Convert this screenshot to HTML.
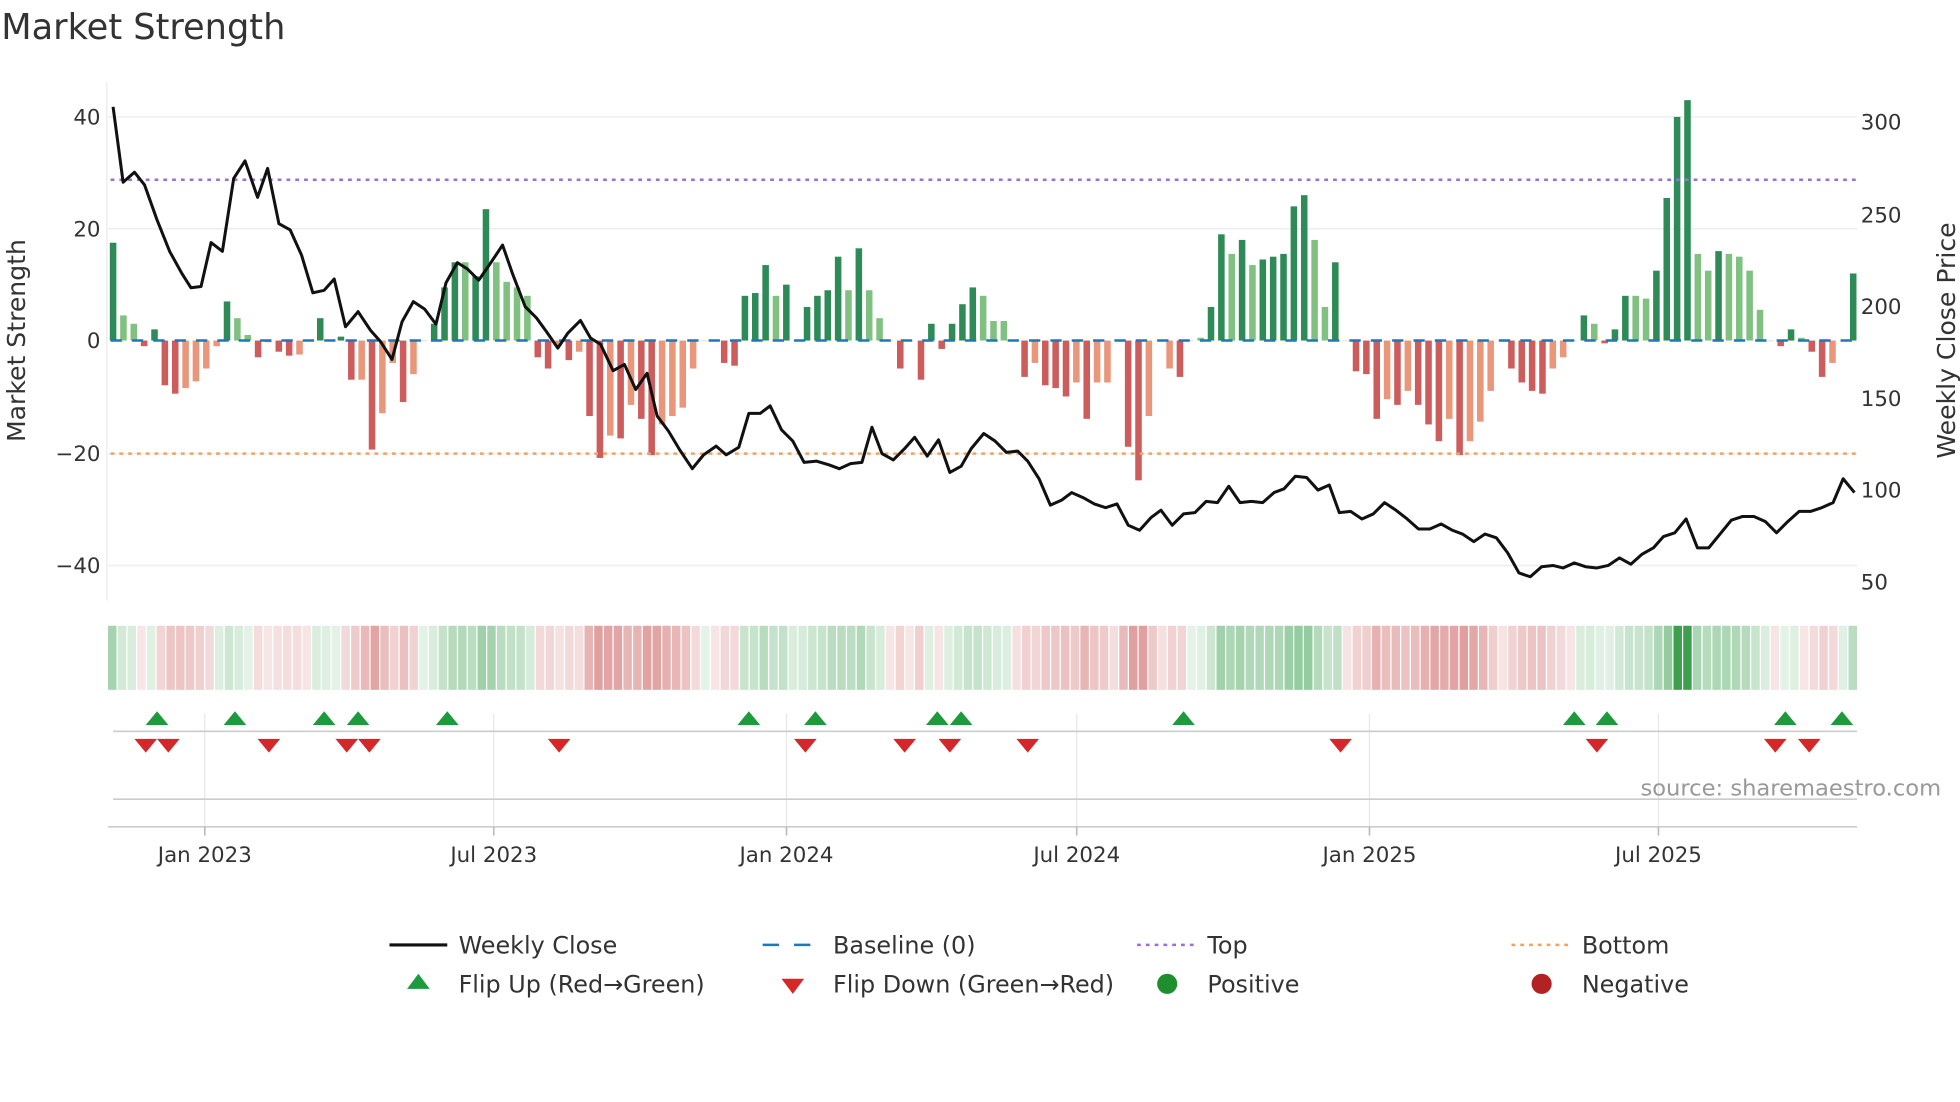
<!DOCTYPE html>
<html><head><meta charset="utf-8"><style>
html,body{margin:0;padding:0;background:#fff;}
svg{display:block;font-family:"DejaVu Sans","Liberation Sans",sans-serif;}
</style></head><body>
<svg id="s" width="1960" height="1102" viewBox="0 0 1560 877" xmlns="http://www.w3.org/2000/svg">
<text x="1" y="31" font-size="28" fill="#333">Market Strength</text>
<g stroke="#eceef2" stroke-width="1.2">
<line x1="86" y1="93" x2="1478" y2="93"/><line x1="86" y1="182" x2="1478" y2="182"/>
<line x1="86" y1="361" x2="1478" y2="361"/><line x1="86" y1="450" x2="1478" y2="450"/>
</g>
<line x1="85" y1="65" x2="85" y2="478" stroke="#eceef2" stroke-width="1.2"/>
<g font-size="17" fill="#333" text-anchor="end">
<text x="80" y="99">40</text><text x="80" y="188">20</text><text x="80" y="277">0</text>
<text x="80" y="367">−20</text><text x="80" y="456">−40</text>
</g>
<g font-size="17" fill="#333">
<text x="1481" y="103">300</text><text x="1481" y="177">250</text><text x="1481" y="250">200</text>
<text x="1481" y="323">150</text><text x="1481" y="396">100</text><text x="1481" y="469">50</text>
</g>
<text transform="translate(20,271) rotate(-90)" font-size="20" fill="#333" text-anchor="middle">Market Strength</text>
<text transform="translate(1556,271) rotate(-90)" font-size="20" fill="#333" text-anchor="middle">Weekly Close Price</text>
<g id="bars"></g>
<line x1="88" y1="271" x2="1478" y2="271" stroke="#1f77b4" stroke-width="2" stroke-dasharray="9,8"/>
<line x1="88" y1="143" x2="1478" y2="143" stroke="#9b6fd6" stroke-width="2" stroke-dasharray="3,4"/>
<line x1="88" y1="361" x2="1478" y2="361" stroke="#f2a25c" stroke-width="2" stroke-dasharray="3,4"/>
<polyline id="price" fill="none" stroke="#111" stroke-width="2.4" stroke-linejoin="round"/>
<g id="heat"></g>
<g stroke="#e6e8ec" stroke-width="1"><line x1="163" y1="568" x2="163" y2="658"/><line x1="393" y1="568" x2="393" y2="658"/><line x1="626" y1="568" x2="626" y2="658"/><line x1="857" y1="568" x2="857" y2="658"/><line x1="1090" y1="568" x2="1090" y2="658"/><line x1="1320" y1="568" x2="1320" y2="658"/></g>
<line x1="90" y1="582" x2="1478" y2="582" stroke="#ccc" stroke-width="1.3"/>
<line x1="90" y1="636" x2="1478" y2="636" stroke="#ccc" stroke-width="1.3"/>
<line x1="86" y1="658" x2="1478" y2="658" stroke="#ccc" stroke-width="1.3"/>
<g stroke="#bbb" stroke-width="1.3"><line x1="163" y1="658" x2="163" y2="665"/><line x1="393" y1="658" x2="393" y2="665"/><line x1="626" y1="658" x2="626" y2="665"/><line x1="857" y1="658" x2="857" y2="665"/><line x1="1090" y1="658" x2="1090" y2="665"/><line x1="1320" y1="658" x2="1320" y2="665"/></g>
<g font-size="17" fill="#333" text-anchor="middle">
<text x="163" y="686">Jan 2023</text><text x="393" y="686">Jul 2023</text><text x="626" y="686">Jan 2024</text>
<text x="857" y="686">Jul 2024</text><text x="1090" y="686">Jan 2025</text><text x="1320" y="686">Jul 2025</text>
</g>
<g id="marks"></g>
<text x="1545" y="633" font-size="18" fill="#999" text-anchor="end">source: sharemaestro.com</text>
<g font-size="19" fill="#333">
<line x1="310" y1="752" x2="356" y2="752" stroke="#111" stroke-width="2.5"/><text x="365" y="759">Weekly Close</text>
<line x1="607" y1="752" x2="652" y2="752" stroke="#1f77b4" stroke-width="2" stroke-dasharray="13,12"/><text x="663" y="759">Baseline (0)</text>
<line x1="905" y1="752" x2="950" y2="752" stroke="#9b6fd6" stroke-width="2" stroke-dasharray="3,4"/><text x="961" y="759">Top</text>
<line x1="1203" y1="752" x2="1248" y2="752" stroke="#f2a25c" stroke-width="2" stroke-dasharray="3,4"/><text x="1259" y="759">Bottom</text>
<polygon points="333,775 324,787 342,787" fill="#1e9a3e"/><text x="365" y="790">Flip Up (Red→Green)</text>
<polygon points="622,779 640,779 631,791" fill="#d62728"/><text x="663" y="790">Flip Down (Green→Red)</text>
<circle cx="929" cy="783" r="8" fill="#1e8f2e"/><text x="961" y="790">Positive</text>
<circle cx="1227" cy="783" r="8" fill="#b22222"/><text x="1259" y="790">Negative</text>
</g>
</svg>
<script>
var NS="http://www.w3.org/2000/svg";
function el(t,a,p){var e=document.createElementNS(NS,t);for(var k in a)e.setAttribute(k,a[k]);p.appendChild(e);return e;}
var B="17.5G 4.5L 3L -1R 2G -8R -9.5R -8.5O -7.3O -5O -1O 7G 4L 1L -3R -0.3O -2R -2.7R -2.5O 0Z 4G 0Z 0.7G -7R -7O -19.5R -13O -4O -11R -6O 0Z 3G 9.5G 14G 14L 11.5G 23.5G 14L 10.5L 9.5L 8L -3R -5R -1O -3.5R -2O -13.5R -21R -17O -17.5R -11.5O -14R -20.5R -15O -13.5O -12O -5O 0Z 0Z -4R -4.5R 8G 8.5G 13.5G 8L 10G 0Z 6G 8G 9G 15G 9L 16.5G 9L 4L 0Z -5R 0Z -7R 3G -1.5R 3G 6.5G 9.5G 8L 3.5L 3.5L 0Z -6.5R -4O -8R -8.5R -10R -7.5O -14R -7.5O -7.5O 0Z -19R -25R -13.5O 0Z -5O -6.5R 0Z 0.5L 6G 19G 15.5L 18G 13.5L 14.5G 15G 15.5G 24G 26G 18L 6L 14G 0Z -5.5R -6R -14R -10.5O -11.5R -9O -11.5R -15R -18R -14O -20.5R -18O -14.5O -9O 0Z -5R -7.5R -9R -9.5R -5O -3O 0Z 4.5G 3L -0.5R 2G 8G 8L 7.5L 12.5G 25.5G 40G 43G 15.5L 12.5L 16G 15.5L 15L 12.5L 5.5L 0Z -1R 2G 0.5L -2R -6.5R -4O 0Z 12G".split(" ");
var col={G:"#2e8b57",L:"#80c080",R:"#cd5c5c",O:"#e9967a",Z:"#ccc"};
var g=document.getElementById("bars"),n=B.length,x0=90,x1=1475,st=(x1-x0)/(n-1);
var vals=[];
B.forEach(function(s,i){var v=parseFloat(s),t=s.slice(-1);vals.push(v);var x=x0+i*st,h=Math.abs(v)*4.45;
el("rect",{x:x-2.6,y:v>0?271-h:271,width:5.2,height:Math.max(h,0.5),fill:col[t]},g);});
var P=[90,85,98,145,107,137,115,147,125,175,135,200,145,218,152,229,160,228,168,193,177,200,186,142,195,128,205,157,213,134,222,178,231,183,240,203,249,233,258,231,266,222,275,260,285,248,295,263,303,272,312,286,320,256,329,240,338,246,347,258,355,225,364,209,372,214,381,223,390,210,400,195,408,218,418,244,427,253,435,264,444,277,452,265,462,255,470,269,478,274,488,295,497,290,506,310,515,297,523,331,532,343,541,358,551,373,560,362,570,355,578,362,588,356,596,329,605,329,613,323,622,342,631,351,640,368,650,367,660,370,668,373,677,369,686,368,694,340,702,361,711,366,720,357,728,348,738,363,747,350,756,376,765,371,773,357,783,345,792,351,801,360,810,359,818,367,827,381,836,402,845,398,853,392,862,396,871,401,880,404,889,401,898,418,907,422,916,412,924,406,933,418,942,409,951,408,960,399,969,400,978,387,987,400,996,399,1005,400,1014,392,1022,389,1031,379,1040,380,1049,390,1058,386,1066,408,1075,407,1084,413,1093,409,1102,400,1111,406,1120,413,1129,421,1138,421,1147,417,1156,422,1164,425,1173,431,1182,425,1191,428,1200,440,1209,456,1218,459,1227,451,1236,450,1244,452,1253,448,1262,451,1271,452,1280,450,1289,444,1298,449,1307,441,1316,436,1324,427,1333,424,1342,413,1351,436,1360,436,1369,425,1378,414,1387,411,1396,411,1405,415,1414,424,1423,415,1432,407,1441,407,1450,404,1459,400,1467,381,1476,392];
var pts=[];for(var i=0;i<P.length;i+=2)pts.push(P[i]+","+P[i+1]);
document.getElementById("price").setAttribute("points",pts.join(" "));
var h=document.getElementById("heat"),m=180,hx0=86,hx1=1479,cw=(hx1-hx0)/m;
for(var k=0;k<m;k++){var f=k/(m-1)*(n-1),a=Math.floor(f),b=Math.min(a+1,n-1),v=vals[a]*(1-(f-a))+vals[b]*(f-a);
var c;if(v>=0){var t=Math.min(1,0.25+v/30);c="rgba(60,160,80,"+(t*0.55)+")";if(v>35)c="rgba(40,150,60,0.9)";}
else{var t=Math.min(1,0.25+(-v)/25);c="rgba(200,80,80,"+(t*0.55)+")";}
el("rect",{x:hx0+k*cw,y:498,width:cw-1,height:51,fill:c},h);}
var mk=document.getElementById("marks");
[125,187,258,285,356,596,649,746,765,942,1253,1279,1421,1466].forEach(function(x){el("polygon",{points:x+",566 "+(x-9)+",577 "+(x+9)+",577",fill:"#1e9a3e"},mk);});
[116,134,214,276,294,445,641,720,756,818,1067,1271,1413,1440].forEach(function(x){el("polygon",{points:(x-9)+",588 "+(x+9)+",588 "+x+",599",fill:"#d62728"},mk);});
</script>
</body></html>
